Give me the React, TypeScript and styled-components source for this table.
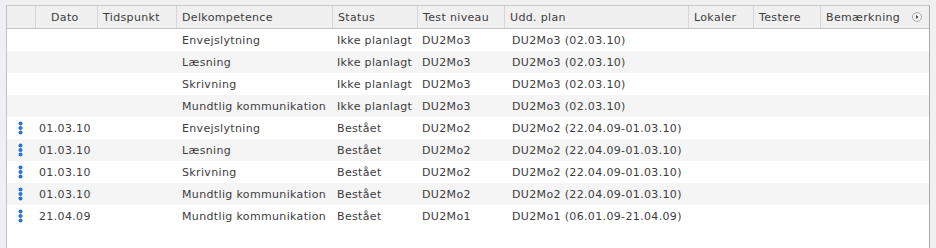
import React from "react";
import styled, { createGlobalStyle } from "styled-components";

const Global = createGlobalStyle`
  html, body { margin: 0; padding: 0; }
  body {
    background: #eef0f6;
    font-family: "DejaVu Sans", Verdana, sans-serif;
    font-size: 11px;
    letter-spacing: 0.35px;
    color: #3c3c3c;
    overflow: hidden;
  }
`;

const COLS = "28px 62px 79px 156px 85px 87px 184px 65px 67px 1fr";

const Page = styled.div`
  width: 936px;
  height: 248px;
  display: flex;
  padding: 5px 0 0 6px;
  box-sizing: border-box;
  background: linear-gradient(to right, #eef0f6 0, #eef0f6 6px, #f0f0f0 6px);
`;

const Panel = styled.div`
  width: 924px;
  height: 243px;
  box-sizing: border-box;
  background: #fff;
  border-top: 1px solid #c9c9c9;
  border-left: 1px solid #c3c3c3;
  border-right: 1px solid #a9a9a9;
  display: flex;
  flex-direction: column;
`;

const Header = styled.div`
  display: grid;
  grid-template-columns: ${COLS};
  height: 22px;
  background: #f0f0f0;
  border-bottom: 1px solid #c4c4c4;
`;

const HeadCell = styled.div<{ $pad?: number }>`
  display: flex;
  align-items: center;
  padding-left: ${(p) => p.$pad ?? 5}px;
  border-left: 1px solid #d6d6d6;
  color: #3c3c3c;
  white-space: nowrap;
  position: relative;
  &:first-child { border-left: none; }
`;

const Row = styled.div<{ $alt: boolean }>`
  display: grid;
  grid-template-columns: ${COLS};
  height: 22px;
  background: ${(p) => (p.$alt ? "#f5f5f5" : "#ffffff")};
`;

const Cell = styled.div<{ $pad?: number }>`
  display: flex;
  align-items: center;
  padding-left: ${(p) => p.$pad ?? 6}px;
  white-space: nowrap;
  overflow: hidden;
  color: #3c3c3c;
`;

const DotsCell = styled.div`
  display: flex;
  align-items: center;
  padding-left: 11px;
`;

const ScrollBtn = styled.span`
  position: absolute;
  right: 7px;
  top: 6px;
  display: inline-flex;
`;

const Dots = () => (
  <svg width="5" height="14" viewBox="0 0 5 14">
    <circle cx="2.5" cy="2.5" r="2" fill="#1f74d6" />
    <circle cx="2.5" cy="7" r="2" fill="#1f74d6" />
    <circle cx="2.5" cy="11.5" r="2" fill="#1f74d6" />
  </svg>
);

const CircleArrow = () => (
  <svg width="10" height="10" viewBox="0 0 10 10">
    <circle cx="5" cy="5" r="4.5" fill="#f4f4f4" stroke="#a8a8a8" />
    <path d="M4 3 L6.5 5 L4 7 Z" fill="#444" />
  </svg>
);

type R = {
  menu: boolean;
  dato: string;
  del: string;
  status: string;
  niveau: string;
  plan: string;
};

const rows: R[] = [
  { menu: false, dato: "", del: "Envejslytning", status: "Ikke planlagt", niveau: "DU2Mo3", plan: "DU2Mo3 (02.03.10)" },
  { menu: false, dato: "", del: "Læsning", status: "Ikke planlagt", niveau: "DU2Mo3", plan: "DU2Mo3 (02.03.10)" },
  { menu: false, dato: "", del: "Skrivning", status: "Ikke planlagt", niveau: "DU2Mo3", plan: "DU2Mo3 (02.03.10)" },
  { menu: false, dato: "", del: "Mundtlig kommunikation", status: "Ikke planlagt", niveau: "DU2Mo3", plan: "DU2Mo3 (02.03.10)" },
  { menu: true, dato: "01.03.10", del: "Envejslytning", status: "Bestået", niveau: "DU2Mo2", plan: "DU2Mo2 (22.04.09-01.03.10)" },
  { menu: true, dato: "01.03.10", del: "Læsning", status: "Bestået", niveau: "DU2Mo2", plan: "DU2Mo2 (22.04.09-01.03.10)" },
  { menu: true, dato: "01.03.10", del: "Skrivning", status: "Bestået", niveau: "DU2Mo2", plan: "DU2Mo2 (22.04.09-01.03.10)" },
  { menu: true, dato: "01.03.10", del: "Mundtlig kommunikation", status: "Bestået", niveau: "DU2Mo2", plan: "DU2Mo2 (22.04.09-01.03.10)" },
  { menu: true, dato: "21.04.09", del: "Mundtlig kommunikation", status: "Bestået", niveau: "DU2Mo1", plan: "DU2Mo1 (06.01.09-21.04.09)" },
];

export default function App() {
  return (
    <>
      <Global />
      <Page>
        <Panel>
          <Header>
            <HeadCell />
            <HeadCell $pad={15}>Dato</HeadCell>
            <HeadCell>Tidspunkt</HeadCell>
            <HeadCell>Delkompetence</HeadCell>
            <HeadCell>Status</HeadCell>
            <HeadCell>Test niveau</HeadCell>
            <HeadCell>Udd. plan</HeadCell>
            <HeadCell>Lokaler</HeadCell>
            <HeadCell>Testere</HeadCell>
            <HeadCell>
              Bemærkning
              <ScrollBtn>
                <CircleArrow />
              </ScrollBtn>
            </HeadCell>
          </Header>
          {rows.map((r, i) => (
            <Row key={i} $alt={i % 2 === 1}>
              <DotsCell>{r.menu && <Dots />}</DotsCell>
              <Cell $pad={4}>{r.dato}</Cell>
              <Cell />
              <Cell>{r.del}</Cell>
              <Cell $pad={5}>{r.status}</Cell>
              <Cell $pad={5}>{r.niveau}</Cell>
              <Cell $pad={8}>{r.plan}</Cell>
              <Cell />
              <Cell />
              <Cell />
            </Row>
          ))}
        </Panel>
      </Page>
    </>
  );
}
